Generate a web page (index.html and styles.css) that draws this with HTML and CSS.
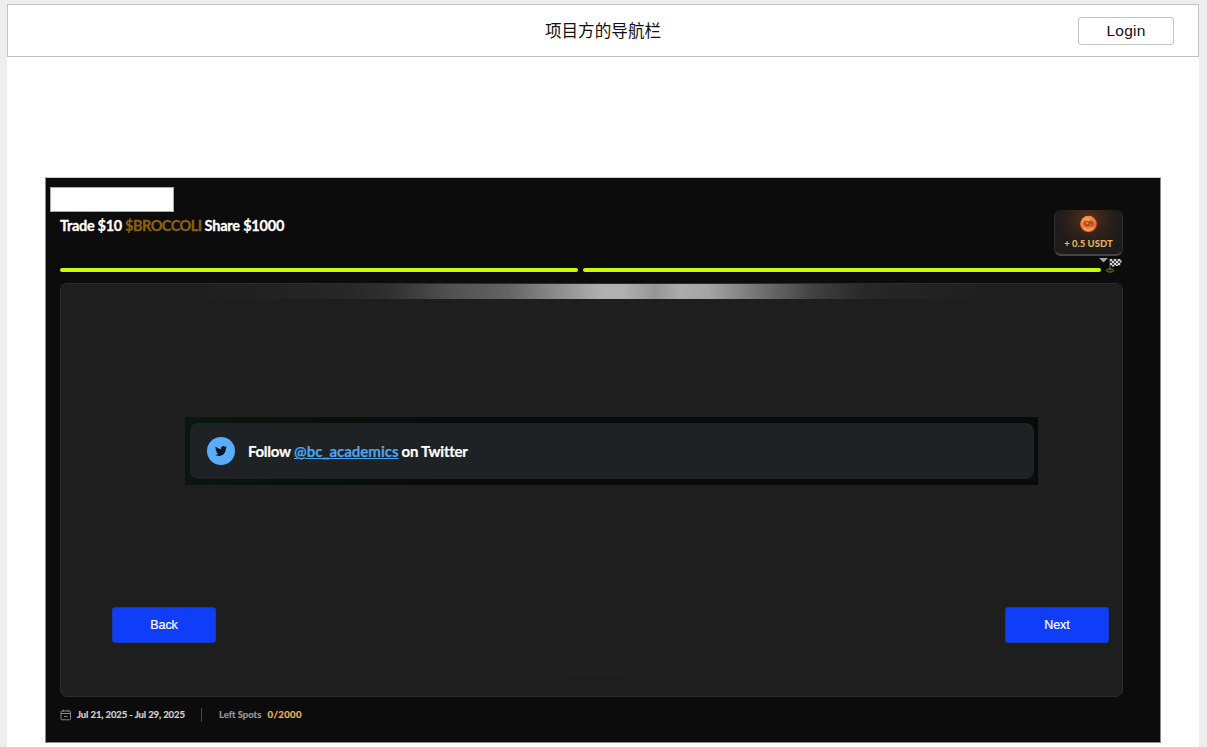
FILE: index.html
```html
<!DOCTYPE html>
<html lang="zh-CN">
<head>
<meta charset="utf-8">
<title>Campaign</title>
<link rel="stylesheet" href="styles.css">
</head>
<body>
<div class="page">
  <header class="navbar">
    <div class="nav-title">项目方的导航栏</div>
    <button class="login">Login</button>
  </header>
  <main class="panel">
    <div class="head">
      <div class="head-text">
        <div class="blank"></div>
        <h1 class="title"><span class="t1">Trade $10</span><span class="t2">$BROCCOLI</span><span class="t3">Share $1000</span></h1>
      </div>
      <div class="reward">
        <svg class="coin" width="18" height="18" viewBox="0 0 18 18">
          <defs><radialGradient id="coinFill" cx=".4" cy=".3" r=".75"><stop offset="0" stop-color="#ffa860"/><stop offset=".6" stop-color="#f5763a"/><stop offset="1" stop-color="#e8522c"/></radialGradient></defs>
          <circle cx="8.500" cy="9" r="8.300" fill="url(#coinFill)"/>
          <path d="M3.500 8.500c0-3 3.500-4 5-2 2-2 5-.5 5.200 2 .2 2.500-2.200 3.500-4 2.500-2 1.500-6 .8-6.200-2.500z" fill="#a8501f"/>
          <circle cx="7" cy="8" r="1.300" fill="#dc8440"/><circle cx="11" cy="9.500" r="1" fill="#d87838"/>
          <path d="M3.800 13c2.500 2.600 7 2.600 9.500-.2" fill="none" stroke="#ffc05b" stroke-width="1.600"/>
        </svg>
        <span class="amount">+ 0.5 USDT</span>
      </div>
    </div>
    <div class="progress">
      <i class="bar"></i><i class="bar"></i>
      <svg class="finish" width="26" height="17" viewBox="0 0 26 17">
        <path d="M1 1h9L5.500 5.500z" fill="#a5a5a5"/>
        <ellipse cx="12" cy="13.500" rx="3.800" ry="1.600" fill="#14200a" stroke="#668c16" stroke-width="1"/>
        <path d="M12 13V2" stroke="#686868" stroke-width="1"/>
        <path d="M12 1.500l3 .8 3-.6 5.500.3-1 7-4-.5-3 1.200-3.500-1z" fill="#444"/>
        <path d="M12 2h2v2h-2zM16 2h2v2h-2zM20 2h2v2h-2zM14 4h2v2h-2zM18 4h2v2h-2zM22 3.500h1.500v2H22zM12 6h2v2h-2zM16 6h2v2h-2zM20 6h2v2h-2zM14 8h2v1.500h-2zM18 7.500h2V9h-2z" fill="#d2d2d2"/>
      </svg>
    </div>
    <section class="card">
      <div class="glow"></div>
      <div class="task-frame">
        <div class="task">
          <div class="bird">
            <svg width="12" height="12" viewBox="0 0 24 24"><path fill="#081019" d="M23.950 4.570a10 10 0 0 1-2.820.77 4.960 4.960 0 0 0 2.160-2.720c-.95.55-2 .95-3.130 1.180a4.920 4.920 0 0 0-8.380 4.480C7.690 8.090 4.070 6.130 1.640 3.160a4.820 4.820 0 0 0-.67 2.480c0 1.710.87 3.210 2.190 4.100a4.900 4.900 0 0 1-2.230-.62v.06a4.920 4.920 0 0 0 3.950 4.830 5 5 0 0 1-2.210.08 4.940 4.940 0 0 0 4.600 3.420A9.870 9.870 0 0 1 0 19.540a13.990 13.990 0 0 0 7.550 2.210c9.050 0 14-7.500 14-13.980 0-.21 0-.42-.02-.63a9.940 9.940 0 0 0 2.420-2.570z"/></svg>
          </div>
          <div class="task-text"><span class="f1">Follow</span><a class="f2">@bc_academics</a><span class="f3">on Twitter</span></div>
        </div>
      </div>
      <div class="actions"><button class="btn">Back</button><button class="btn">Next</button></div>
    </section>
    <footer class="foot">
      <svg width="12" height="12" viewBox="0 0 12 12" fill="none" stroke="#888"><rect x="1" y="2" width="9.500" height="8.800" rx="1"/><path d="M1 4.500h9.500M3.500 .7v2M8 .7v2M4 7.500h3.500"/></svg>
      <span class="dates">Jul 21, 2025 - Jul 29, 2025</span>
      <i class="divider"></i>
      <span class="left">Left Spots</span>
      <span class="count">0/2000</span>
    </footer>
  </main>
</div>
</body>
</html>
```

FILE: styles.css
```css
* { box-sizing: border-box; }
html, body { margin: 0; height: 747px; overflow: hidden; }
body { background: #eee; padding: 4px 8px 0 7px; font-family: Lato, "Noto Sans CJK SC", sans-serif; }
button { margin: 0; padding: 0; cursor: pointer; }
.page { height: 743px; background: #fff; }
.navbar {
  height: 53px;
  border: 1px solid #c2c2c2;
  display: grid;
  grid-template-columns: 1fr auto 1fr;
  align-items: center;
  padding-right: 24px;
}
.nav-title { grid-column: 2; font: 16.6px/24px "Noto Sans CJK SC", sans-serif; color: #111; padding: 0 0 2px 24px; }
.login {
  justify-self: end;
  width: 96px; height: 28px;
  border: 1px solid #c4c4c4; border-radius: 3px;
  background: #fff; color: #111;
  font: 15.500px/24px "Liberation Sans", Arial, sans-serif;
  letter-spacing: .2px;
}
.panel {
  width: 1116px; height: 566px;
  margin: 120px 0 0 38px;
  background: #0c0c0c;
  border: 1px solid #8b8b8b; border-top-color: #ccc;
  padding: 9px 37px 0 14px;
}
.head { height: 81px; display: flex; justify-content: space-between; }
.blank { width: 124px; height: 25px; margin-left: -10px; background: #fff; border: 1px solid #aaa; }
.title { margin: 4px 0 0; font-size: 14.500px; line-height: 20px; font-weight: 700; color: #fff; display: flex; white-space: nowrap; -webkit-text-stroke: .3px; }
.t1 { width: 65px; letter-spacing: -.3px; }
.t2 { width: 79.500px; color: #8a610c; letter-spacing: -.5px; }
.t3 { letter-spacing: -.2px; }
.reward {
  margin-top: 23px;
  width: 69px; height: 46px;
  border: 1px solid #303030; border-top: 0; border-bottom: 2px solid #454545;
  border-radius: 7px;
  background: radial-gradient(ellipse 32px 30px at 50% 20%, #553019, #2f211a 60%, #1d1c1b);
  display: flex; flex-direction: column; align-items: center;
  padding-top: 5px;
}
.coin { display: block; }
.amount { font-size: 9.500px; line-height: 12px; margin-top: 5px; font-weight: 900; color: #efae58; white-space: nowrap; }
.progress { height: 4px; display: flex; align-items: flex-start; gap: 5px; }
.bar { width: 518px; flex: none; height: 4px; border-radius: 2px; background: #c8ff00; }
.finish { flex: none; margin: -11px 0 0 -8px; }
.card {
  width: 1063px; height: 414px;
  margin-top: 11px;
  background: radial-gradient(ellipse 46px 5px at 535px 389px, #212121, #1e1e1e);
  border: 1px solid #2d2d2d; border-radius: 7px;
}
.glow {
  height: 15px;
  background: linear-gradient(90deg, #1e1e1e 11%, #222 20%, #272727 27%, #303030 31%, #505050 36.500%, #626262 42%, #8a8a8a 46.500%, #b0b0b0 51%, #b0b0b0 53%, #969696 56%, #acacac 58.500%, #a4a4a4 61%, #707070 66%, #404040 71%, #272727 76%, #1e1e1e 88%);
}
.task-frame {
  width: 853px; height: 68px;
  margin: 118px 0 0 124px;
  padding: 6px 4px 6px 5px;
  background: linear-gradient(100deg, #07190f, #08120c 12%, #090b0b 30%, #090b0b);
}
.task { height: 56px; border-radius: 8px; background: #1e2224; display: flex; align-items: center; padding-left: 17px; }
.bird { width: 28px; height: 28px; border-radius: 50%; background: #58adff; display: flex; align-items: center; justify-content: center; }
.task-text { display: flex; margin-left: 13px; font-size: 15px; line-height: 20px; font-weight: 700; color: #fff; white-space: nowrap; -webkit-text-stroke: .2px; }
.f1 { width: 46px; letter-spacing: -.3px; }
.f2 { margin-right: 3px; color: #4fa4ef; text-decoration: underline; }
.f3 { letter-spacing: -.25px; }
.actions { display: flex; justify-content: space-between; padding: 122px 13px 0 51px; }
.btn {
  width: 104px; height: 36px;
  border: 1px solid #173bb4; border-radius: 3px;
  background: #103ef8; color: #fff;
  font: 12.500px "Liberation Sans", Arial, sans-serif;
  letter-spacing: -.1px;
  -webkit-text-stroke: .2px;
}
.foot { display: flex; align-items: center; height: 14px; margin-top: 11px; font-size: 9.500px; line-height: 14px; font-weight: 700; white-space: nowrap; -webkit-text-stroke: .2px; }
.dates { width: 124px; margin-left: 5px; color: #d2d2d2; letter-spacing: -.12px; }
.divider { width: 1px; height: 14px; background: #454545; margin-right: 17px; }
.left { width: 48.500px; color: #999; }
.count { color: #f0b95a; letter-spacing: .4px; }
```
